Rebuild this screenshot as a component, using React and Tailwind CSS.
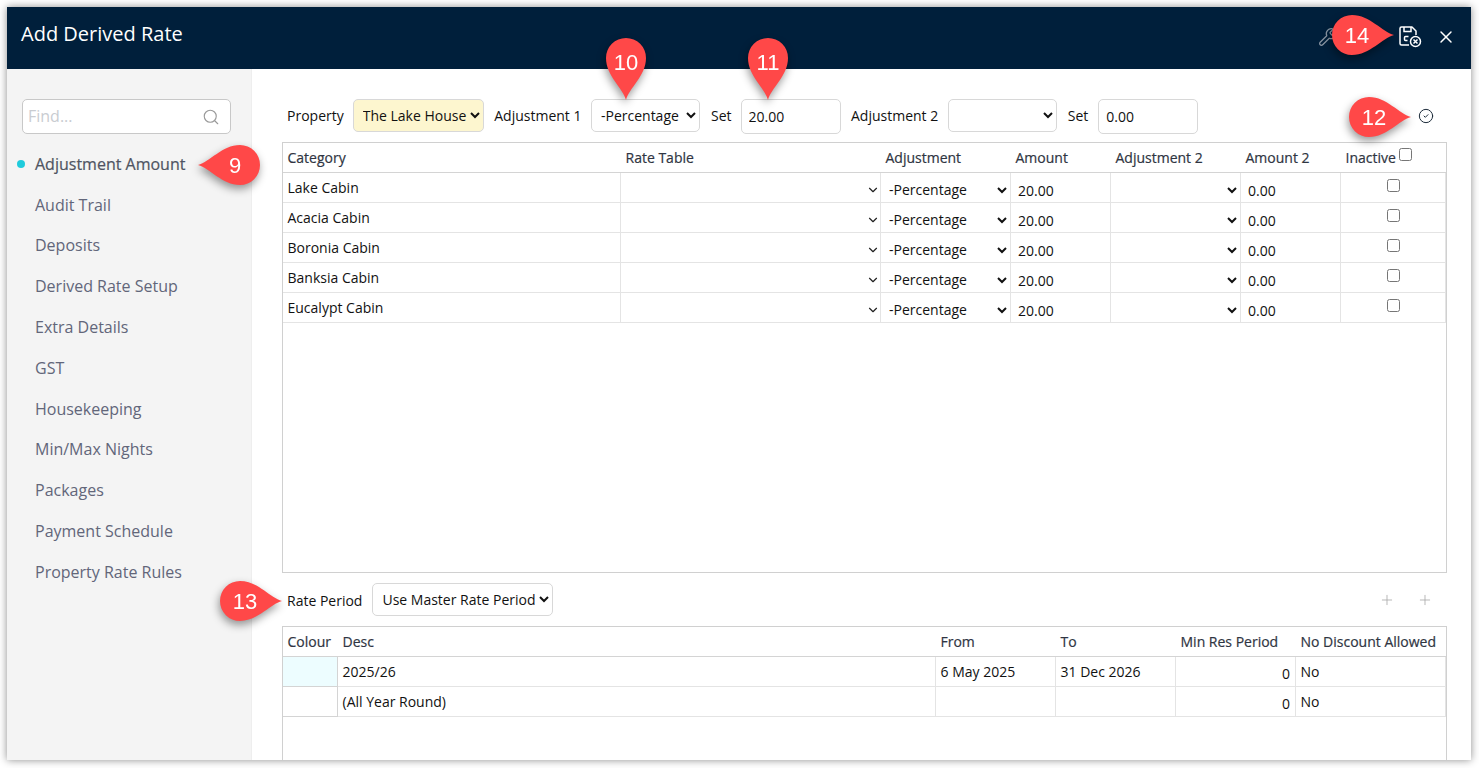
import React from "react";
import { ChevronDown, CircleCheck, Plus, Search, Wrench, X } from "lucide-react";

const font = "font-['Open_Sans','Noto_Sans',sans-serif]";

const navItems = [
  "Audit Trail",
  "Deposits",
  "Derived Rate Setup",
  "Extra Details",
  "GST",
  "Housekeeping",
  "Min/Max Nights",
  "Packages",
  "Payment Schedule",
  "Property Rate Rules",
];

const categories = ["Lake Cabin", "Acacia Cabin", "Boronia Cabin", "Banksia Cabin", "Eucalypt Cabin"];

const catCols = "grid grid-cols-[338px_260px_130px_100px_130px_100px_105px]";
const periodCols = "grid grid-cols-[55px_598px_120px_120px_120px_150px]";
const headCell = "pl-[4.500px] pr-[5px] h-[30px] flex items-center font-medium text-[#2f3542] [-webkit-text-stroke:0.2px_#2f3542] border-b border-[#d4d4d4]";
const cell = "h-[30px] border-b border-r border-[#e4e4e4] flex items-center relative";

function Callout({ className, rotate, labelClass, label }) {
  return (
    <div className={`absolute w-[40px] h-[40px] z-10 drop-shadow-[-1px_4px_4px_rgba(0,0,0,0.4)] ${className}`}>
      <svg viewBox="0 0 62 40" className={`absolute left-0 top-0 w-[62px] h-[40px] overflow-visible origin-[20px_20px] ${rotate}`}>
        <path d="M62 20C50 17 38 0 20 0A20 20 0 0 0 20 40C38 40 50 23 62 20Z" fill="#ff4848" />
      </svg>
      <span className={`absolute inset-0 flex items-center justify-center text-white text-[22px] font-['Liberation_Sans',sans-serif] ${labelClass}`}>
        {label}
      </span>
    </div>
  );
}

function SaveCancelIcon() {
  return (
    <svg viewBox="0 0 24 24" className="w-[24px] h-[24px] text-white" fill="none" stroke="currentColor" strokeWidth="1.5">
      <path d="M11 20H3.500A1.500 1.500 0 0 1 2 18.500V3.500A1.500 1.500 0 0 1 3.500 2H14l4 4v4" strokeLinejoin="round" />
      <path d="M6 2v4.500h7V2" />
      <path d="M10.500 11.500H7.500a1 1 0 0 0-1 1v2a1 1 0 0 0 1 1h2" />
      <circle cx="17.500" cy="16.500" r="5" />
      <path d="M15.500 14.500l4 4M19.500 14.500l-4 4" />
    </svg>
  );
}

function Field({ children, className }) {
  return <span className={`shrink-0 ${className}`}>{children}</span>;
}

function TopSelect({ value, options, className }) {
  return (
    <select
      defaultValue={value}
      className={`border border-[#d8d8d8] rounded-[5px] pl-[5px] shrink-0 ${className}`}
    >
      {options.map((o) => (
        <option key={o}>{o}</option>
      ))}
    </select>
  );
}

export default function App() {
  return (
    <div className={`relative w-[1479px] h-[768px] bg-white p-[7px] pr-[8px] pb-[8px] overflow-hidden text-[14px] text-[#111] ${font}`}>
      <div className="w-full h-full flex flex-col overflow-hidden bg-white shadow-[0_0_8px_rgba(0,0,0,0.45)]">
        {/* header */}
        <header className="h-[62px] shrink-0 bg-[#001f3b] flex items-center pl-[14px] pr-[15px] pb-[2px] text-white">
          <h1 className="text-[20px] font-normal flex-1 pb-[6px]">Add Derived Rate</h1>
          <Wrench size={20} className="text-[#8a96a3] mr-[60px]" strokeWidth={1.5} />
          <SaveCancelIcon />
          <X size={20} className="ml-[14px]" strokeWidth={1.75} />
        </header>

        <div className="flex flex-1 min-h-0">
          {/* sidebar */}
          <aside className="w-[245px] shrink-0 bg-[#f4f4f4] border-r border-[#eeeeee] pt-[30px] pl-[15px] pr-[20px]">
            <div className="h-[35px] bg-white border border-[#c8c8c8] rounded-[5px] flex items-center pl-[5px] pr-[10px]">
              <span className="flex-1 text-[16px] text-[#c9ccd1] pb-[2px]">Find...</span>
              <Search size={18} className="text-[#999]" strokeWidth={1.5} />
            </div>
            <div className="relative mt-[19px] h-[22px] pl-[13px] flex items-center text-[16px] font-medium text-[#4f5462] [-webkit-text-stroke:0.2px_#4f5462] whitespace-nowrap">
              <span className="absolute left-[-5px] top-[7px] w-[8px] h-[8px] rounded-full bg-[#1fcbdc]" />
              Adjustment Amount
            </div>
            <nav className="mt-[9.200px] flex flex-col">
              {navItems.map((item) => (
                <div key={item} className="h-[40.800px] pl-[13px] flex items-center text-[16px] text-[#62667a]">
                  {item}
                </div>
              ))}
            </nav>
          </aside>

          {/* main */}
          <main className="flex-1 min-w-0 pt-[30px] pl-[30px] pr-[24px]">
            <div className="h-[35px] flex items-start pl-[5px]">
              <Field className="mt-[6px]">Property</Field>
              <TopSelect value="The Lake House" options={["The Lake House"]} className="h-[33px] ml-[9px] w-[131px] bg-[#fdf6cf]" />
              <Field className="ml-[10.500px] mt-[6px]">Adjustment 1</Field>
              <TopSelect value="-Percentage" options={["-Percentage"]} className="h-[33px] ml-[9.500px] w-[109px] bg-white" />
              <Field className="ml-[11px] mt-[6px]">Set</Field>
              <input readOnly value="20.00" className="ml-[9px] w-[100px] h-[35px] border border-[#d8d8d8] rounded-[5px] px-[7px]" />
              <Field className="ml-[10.500px] mt-[6px]">Adjustment 2</Field>
              <TopSelect value="" options={[""]} className="h-[33px] ml-[9.500px] w-[109px] bg-white" />
              <Field className="ml-[11px] mt-[6px]">Set</Field>
              <input readOnly value="0.00" className="ml-[10px] w-[100px] h-[35px] border border-[#d8d8d8] rounded-[5px] px-[7px]" />
              <CircleCheck size={16} strokeWidth={1.5} className="ml-auto mr-[13px] mt-[9px] text-[#1c2b3a]" />
            </div>

            {/* category table */}
            <div className="mt-[8px] h-[431px] border border-[#d0d0d0]">
              <div className={catCols}>
                <div className={headCell}>Category</div>
                <div className={headCell}>Rate Table</div>
                <div className={headCell}>Adjustment</div>
                <div className={headCell}>Amount</div>
                <div className={headCell}>Adjustment 2</div>
                <div className={headCell}>Amount 2</div>
                <div className={`${headCell} relative`}>
                  Inactive
                  <input type="checkbox" className="absolute left-[58px] top-[5px] m-0" />
                </div>
              </div>
              {categories.map((name) => (
                <div key={name} className={catCols}>
                  <div className={`${cell} pl-[4.500px] pb-[1px]`}>{name}</div>
                  <div className={cell}>
                    <ChevronDown size={14} strokeWidth={2} className="absolute right-[0px] top-[10px] text-[#222]" />
                  </div>
                  <div className={cell}>
                    <select defaultValue="-Percentage" className="w-full h-[24px] mt-[4px] pl-[4px] pr-[2px]">
                      <option>-Percentage</option>
                    </select>
                  </div>
                  <div className={`${cell} px-[7px] pt-[5px]`}>20.00</div>
                  <div className={cell}>
                    <select defaultValue="" className="w-full h-[24px] mt-[4px] pr-[2px]">
                      <option></option>
                    </select>
                  </div>
                  <div className={`${cell} px-[7px] pt-[5px]`}>0.00</div>
                  <div className={`${cell} justify-center pb-[5px]`}>
                    <input type="checkbox" className="m-0" />
                  </div>
                </div>
              ))}
            </div>

            {/* rate period */}
            <div className="mt-[10px] h-[33px] flex items-start pl-[5px]">
              <span className="mt-[7px]">Rate Period</span>
              <TopSelect value="Use Master Rate Period" options={["Use Master Rate Period"]} className="h-[33px] ml-[10px] w-[181px] bg-white" />
              <Plus size={16} strokeWidth={1.25} className="ml-auto mt-[9px] text-[#aaa]" />
              <Plus size={16} strokeWidth={1.25} className="ml-[22px] mr-[14px] mt-[9px] text-[#aaa]" />
            </div>

            <div className="mt-[10px] h-[140px] border border-[#d0d0d0]">
              <div className={periodCols}>
                {["Colour", "Desc", "From", "To", "Min Res Period", "No Discount Allowed"].map((h) => (
                  <div key={h} className={`${headCell} whitespace-nowrap`}>{h}</div>
                ))}
              </div>
              {[
                { desc: "2025/26", from: "6 May 2025", to: "31 Dec 2026", colour: "bg-[#edfdff]" },
                { desc: "(All Year Round)", from: "", to: "", colour: "bg-white" },
              ].map((row) => (
                <div key={row.desc} className={periodCols}>
                  <div className={`${cell} ${row.colour} border-b-[#d4d4d4] border-r-[#d4d4d4]`} />
                  <div className={`${cell} pl-[4.500px]`}>{row.desc}</div>
                  <div className={`${cell} pl-[4.500px]`}>{row.from}</div>
                  <div className={`${cell} pl-[4.500px]`}>{row.to}</div>
                  <div className={`${cell} px-[5px] justify-end pt-[3px]`}>0</div>
                  <div className={`${cell} pl-[4.500px]`}>No</div>
                </div>
              ))}
            </div>
          </main>
        </div>
      </div>

      <Callout label="14" rotate="rotate-0" labelClass="translate-x-[5px]" className="left-[1332px] top-[15px]" />
      <Callout label="12" rotate="rotate-0" labelClass="translate-x-[5px]" className="left-[1349px] top-[97px]" />
      <Callout label="9" rotate="rotate-180" labelClass="-translate-x-[5px]" className="left-[220px] top-[145px]" />
      <Callout label="10" rotate="rotate-90" labelClass="translate-y-[4px]" className="left-[606px] top-[38px]" />
      <Callout label="11" rotate="rotate-90" labelClass="translate-y-[4px]" className="left-[748px] top-[38px]" />
      <Callout label="13" rotate="rotate-0" labelClass="translate-x-[5px]" className="left-[220px] top-[581px]" />
    </div>
  );
}
